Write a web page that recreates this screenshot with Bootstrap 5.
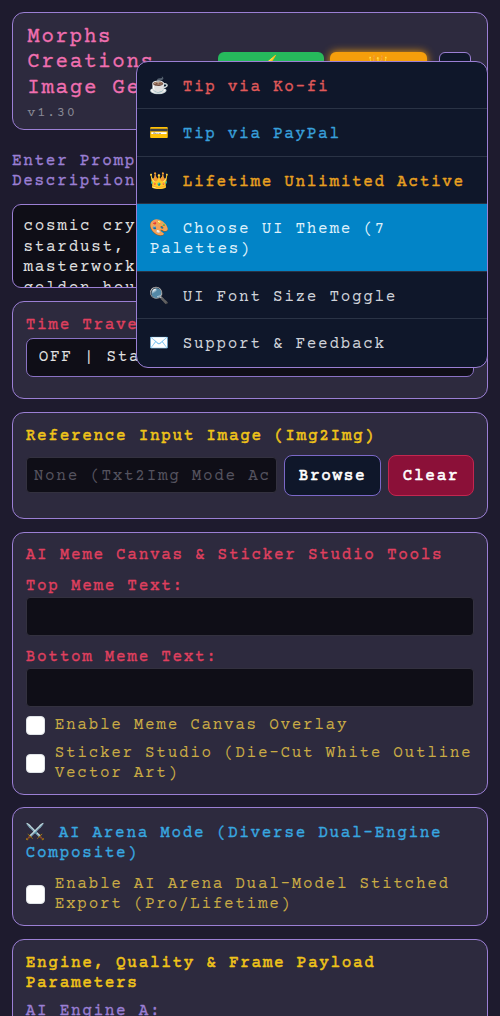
<!DOCTYPE html>
<html lang="en">
<head>
    <meta charset="UTF-8">
    <meta name="viewport" content="width=device-width, initial-scale=1.0">
    <title>Morphs Creations Image Gen</title>
    <link href="https://cdn.jsdelivr.net/npm/bootstrap@5.3.0/dist/css/bootstrap.min.css" rel="stylesheet">
    <style>
        html, body { height: 100%; overflow: hidden; }
        body { background: #1e1b2e; color: #e0e0e0; font-family: "Courier Prime", "Liberation Mono", monospace; font-size: 16px; letter-spacing: 1.69px; line-height: 20.5px; }
        .app-wrap { position: relative; padding: 12px; }
        .panel { background: #2d2a3e; border: 1px solid #9b7fd4; border-radius: 12px; padding: 12.8px; margin-bottom: 12.8px; }
        .panel-tight { padding-bottom: 9.8px; }
        .panel-head { padding-top: 11.8px; padding-bottom: 9.2px; }
        .panel-arena { padding-top: 13.3px; padding-bottom: 10.3px; }
        .app-title { color: #f06fb0; font-size: 20.8px; line-height: 25.5px; letter-spacing: 1.69px; font-weight: 400; margin: 0; padding-left: 1.5px; -webkit-text-stroke: 0.3px; }
        .app-version { color: #8a8a96; font-size: 13.6px; line-height: 14px; margin-top: 5px; padding-left: 1.5px; }
        .head-col { width: 180px; flex: none; }
        .head-btn { display: flex; justify-content: center; align-items: flex-start; height: 42px; border: 0; border-radius: 6px; font-size: 16px; padding: 2px 0 0; }
        .btn-zap { width: 106px; background: #26b95c; color: #ffd23f; }
        .btn-crown { width: 97px; background: #f59e0b; color: #fff; box-shadow: 0 0 8px #f59e0b; margin-left: 6px; }
        .btn-menu { width: 32px; background: #0f172a; border: 1px solid #9b7fd4; color: #ddd; margin: 0 3px 0 12px; align-items: center; padding: 0; }
        .field-label { display: block; color: #9b7fd4; margin-bottom: 0.5px; -webkit-text-stroke: 0.3px; }
        .prompt-label { padding-top: 7.5px; margin-bottom: 12.3px; }
        .prompt-box.form-control { display: block; height: 84px; background: #0f0e17; border: 1px solid #9b7fd4; border-radius: 9px; color: #e0e0e0; padding: 11px 10.5px; overflow: hidden; margin-bottom: 12.8px; font: inherit; letter-spacing: 1.69px; resize: none; }
        .tone-red { color: #e0405f; }
        .tone-gold { color: #f0c419; }
        .tone-blue { color: #38a8e0; }
        .panel-title { font-size: 16px; line-height: 20.5px; margin: 0 0 10px; font-weight: 400; -webkit-text-stroke: 0.3px; }
        .panel-title.strong { margin-bottom: 8px; -webkit-text-stroke: 0.5px; }
        .panel-title.title-tight { margin-bottom: 7px; }
        .dark-select.form-select { background-color: #0f0e17; border: 1px solid #8a72c4; border-radius: 7px; height: 39px; color: #e0e0e0; padding: 8px 12px; font: inherit; letter-spacing: 1.69px; margin: 2.5px 0 9px; }
        .dark-input.form-control { background: #0f0e17; border: 1px solid #33313f; border-radius: 4px; height: 39px; margin-bottom: 11.5px; font: inherit; color: #e0e0e0; }
        .file-name.form-control { flex: 1 1 0; min-width: 0; height: 36px; margin: 0; padding: 8px 7px 6px; letter-spacing: 1.69px; }
        .file-name::placeholder { color: #55535f; opacity: 1; }
        .btn-browse, .btn-clear { height: 41px; color: #fff; font-weight: 400; -webkit-text-stroke: 0.6px; letter-spacing: 1.69px; font-family: inherit; font-size: 16px; border-radius: 8px; padding: 3px 14px 0; flex: none; }
        .btn-browse { background: #0f172a; border: 1px solid #7b68c8; }
        .btn-clear { background: #8b1038; border: 1px solid #c2274f; }
        .file-row { gap: 6.4px; margin-bottom: 9.4px; }
        .check-row { display: flex; align-items: center; gap: 10px; color: #c9ab45; margin-top: 8px; }
        .check-row + .check-row { margin-top: 7px; }
        .check-row .form-check-input { width: 19px; height: 19px; margin: 0; flex: none; border-radius: 4px; }
        .float-menu { position: absolute; top: 61px; left: 136px; width: 352px; background: #0f172a; border: 1px solid #9b7fd4; border-radius: 12px; overflow: hidden; z-index: 10; padding: 0; font-size: 16px; }
        .float-menu .dropdown-item { padding: 13.8px 12.8px 11.1px; border-bottom: 1px solid #2a3345; white-space: normal; color: #cfd3da; }
        .float-menu .dropdown-item:last-child { border-bottom: 0; padding-bottom: 12px; }
        .item-red { color: #e05a5a !important; -webkit-text-stroke: 0.3px; }
        .item-blue { color: #38a0dc !important; -webkit-text-stroke: 0.3px; }
        .item-gold { color: #e8a020 !important; -webkit-text-stroke: 0.4px; }
        .float-menu .dropdown-item.item-on { background: #0284c7; color: #dff1fb; }
        .glyph { font-family: "Noto Color Emoji", "Courier Prime", sans-serif; font-weight: 400; -webkit-text-stroke: 0; }
    </style>
</head>
<body>
    <div class="app-wrap">
        <div class="panel panel-head d-flex">
            <div class="head-col">
                <h1 class="app-title">Morphs Creations Image Gen</h1>
                <div class="app-version">v1.30</div>
            </div>
            <div class="d-flex ms-auto align-items-center">
                <button class="head-btn btn-zap"><span class="glyph">⚡</span></button>
                <button class="head-btn btn-crown"><span class="glyph">👑</span></button>
                <button class="head-btn btn-menu">☰</button>
            </div>
        </div>

        <div class="float-menu">
            <a class="dropdown-item item-red" href="#"><span class="glyph">☕</span> Tip via Ko-fi</a>
            <a class="dropdown-item item-blue" href="#"><span class="glyph">💳</span> Tip via PayPal</a>
            <a class="dropdown-item item-gold" href="#"><span class="glyph">👑</span> Lifetime Unlimited Active</a>
            <a class="dropdown-item item-on" href="#"><span class="glyph">🎨</span> Choose UI Theme (7 Palettes)</a>
            <a class="dropdown-item" href="#"><span class="glyph">🔍</span> UI Font Size Toggle</a>
            <a class="dropdown-item" href="#"><span class="glyph">✉️</span> Support &amp; Feedback</a>
        </div>

        <label class="field-label prompt-label">Enter Prompt Direction &amp; Visual Scene Description</label>
        <textarea class="form-control prompt-box" readonly>cosmic crystal nebula, violet clouds, stardust, radiant ethereal glow, ornate masterwork detail, cinematic lighting, golden hour atmosphere</textarea>

        <div class="panel">
            <label class="field-label tone-red">Time Travel Era</label>
            <select class="form-select dark-select"><option>OFF | Standard Present Day</option></select>
        </div>

        <div class="panel">
            <h2 class="panel-title tone-gold strong">Reference Input Image (Img2Img)</h2>
            <div class="d-flex file-row align-items-center">
                <input class="form-control dark-input file-name" placeholder="None (Txt2Img Mode Active)" readonly>
                <button class="btn-browse">Browse</button>
                <button class="btn-clear">Clear</button>
            </div>
        </div>

        <div class="panel panel-tight">
            <h2 class="panel-title tone-red">AI Meme Canvas &amp; Sticker Studio Tools</h2>
            <label class="field-label tone-red">Top Meme Text:</label>
            <input class="form-control dark-input">
            <label class="field-label tone-red">Bottom Meme Text:</label>
            <input class="form-control dark-input mb-0">
            <label class="check-row"><input class="form-check-input" type="checkbox"><span>Enable Meme Canvas Overlay</span></label>
            <label class="check-row"><input class="form-check-input" type="checkbox"><span>Sticker Studio (Die-Cut White Outline Vector Art)</span></label>
        </div>

        <div class="panel panel-arena">
            <h2 class="panel-title tone-blue"><span class="glyph">⚔️</span> AI Arena Mode (Diverse Dual-Engine Composite)</h2>
            <label class="check-row"><input class="form-check-input" type="checkbox"><span>Enable AI Arena Dual-Model Stitched Export (Pro/Lifetime)</span></label>
        </div>

        <div class="panel">
            <h2 class="panel-title tone-gold strong title-tight">Engine, Quality &amp; Frame Payload Parameters</h2>
            <label class="field-label">AI Engine A:</label>
        </div>
    </div>
    <script src="https://cdn.jsdelivr.net/npm/bootstrap@5.3.0/dist/js/bootstrap.bundle.min.js"></script>
</body>
</html>
